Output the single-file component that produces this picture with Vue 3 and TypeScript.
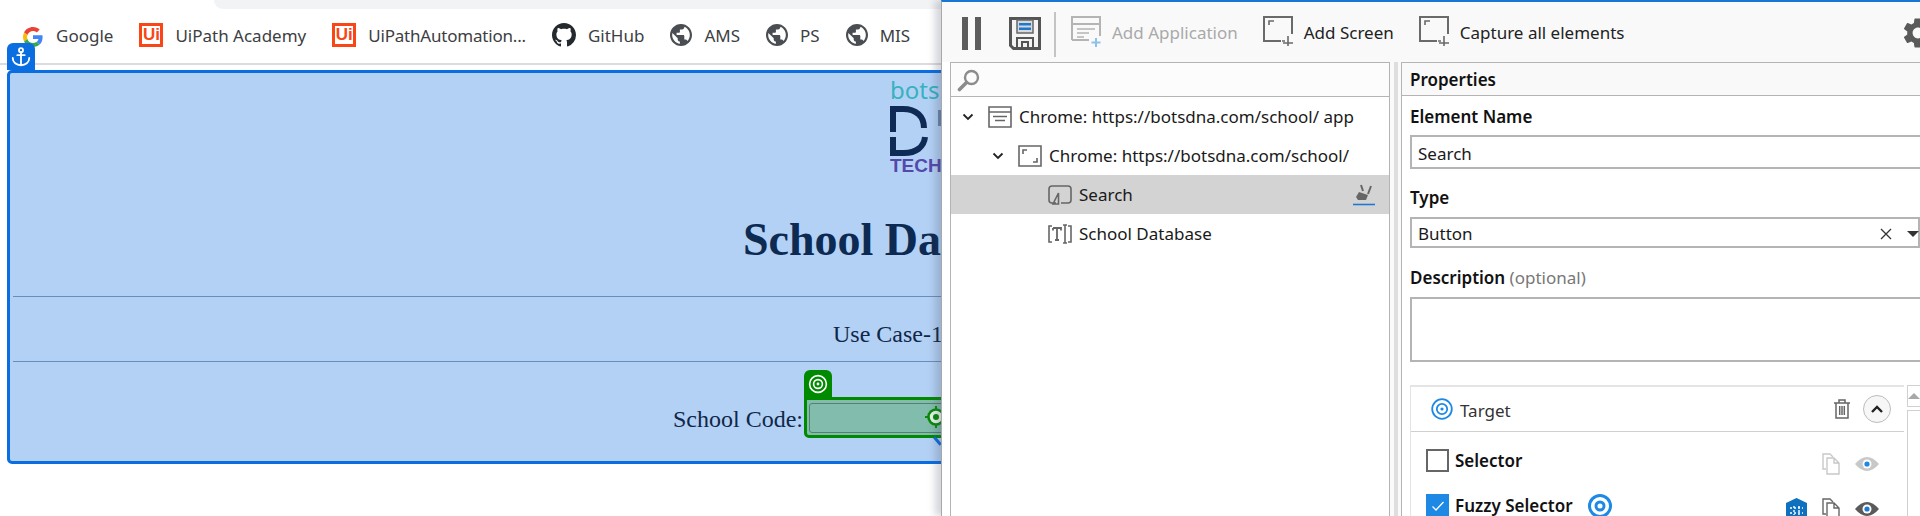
<template>
  <div class="desktop">
    <div class="browser">
      <div class="tabstrip"><div class="tabstrip-fill"></div></div>
      <div class="bookmarks">
        <div v-for="b in bookmarks" :key="b.label" class="bookmark">
          <svg v-if="b.kind === 'google'" class="bm-google" viewBox="0 0 48 48">
            <path fill="#EA4335" d="M24 9.5c3.54 0 6.71 1.22 9.21 3.6l6.85-6.85C35.9 2.38 30.47 0 24 0 14.62 0 6.51 5.38 2.56 13.22l7.98 6.19C12.43 13.72 17.74 9.5 24 9.5z" />
            <path fill="#4285F4" d="M46.98 24.55c0-1.57-.15-3.09-.38-4.55H24v9.02h12.94c-.58 2.96-2.26 5.48-4.78 7.18l7.73 6c4.51-4.18 7.09-10.36 7.09-17.65z" />
            <path fill="#FBBC05" d="M10.53 28.59c-.48-1.45-.76-2.99-.76-4.59s.27-3.14.76-4.59l-7.98-6.19C.92 16.46 0 20.12 0 24c0 3.88.92 7.54 2.56 10.78l7.97-6.19z" />
            <path fill="#34A853" d="M24 48c6.48 0 11.93-2.13 15.89-5.81l-7.73-6c-2.15 1.45-4.92 2.3-8.16 2.3-6.26 0-11.57-4.22-13.47-9.91l-7.98 6.19C6.51 42.62 14.62 48 24 48z" />
          </svg>
          <span v-else-if="b.kind === 'uipath'" class="bm-uipath">Ui</span>
          <svg v-else-if="b.kind === 'github'" class="bm-github" viewBox="0 0 16 16">
            <path fill="#24292e" d="M8 0C3.58 0 0 3.58 0 8c0 3.54 2.29 6.53 5.47 7.59.4.07.55-.17.55-.38 0-.19-.01-.82-.01-1.49-2.01.37-2.53-.49-2.69-.94-.09-.23-.48-.94-.82-1.13-.28-.15-.68-.52-.01-.53.63-.01 1.08.58 1.23.82.72 1.21 1.87.87 2.33.66.07-.52.28-.87.51-1.07-1.78-.2-3.64-.89-3.64-3.95 0-.87.31-1.59.82-2.15-.08-.2-.36-1.02.08-2.12 0 0 .67-.21 2.2.82.64-.18 1.32-.27 2-.27.68 0 1.36.09 2 .27 1.53-1.04 2.2-.82 2.2-.82.44 1.1.16 1.92.08 2.12.51.56.82 1.27.82 2.15 0 3.07-1.87 3.75-3.65 3.95.29.25.54.73.54 1.48 0 1.07-.01 1.93-.01 2.2 0 .21.15.46.55.38A8.013 8.013 0 0016 8c0-4.42-3.58-8-8-8z" />
          </svg>
          <svg v-else class="bm-globe" viewBox="2 2 20 20">
            <path fill="#4a4d51" d="M12 2C6.48 2 2 6.48 2 12s4.48 10 10 10 10-4.48 10-10S17.52 2 12 2zm-1 17.93c-3.95-.49-7-3.85-7-7.93 0-.62.08-1.21.21-1.79L9 15v1c0 1.1.9 2 2 2v1.93zm6.9-2.54c-.26-.81-1-1.39-1.9-1.39h-1v-3c0-.55-.45-1-1-1H8v-2h2c.55 0 1-.45 1-1V7h2c1.1 0 2-.9 2-2v-.41c2.93 1.19 5 4.06 5 7.41 0 2.08-.8 3.97-2.1 5.39z" />
          </svg>
          <span class="bm-label" :class="{ tight: b.tight }">{{ b.label }}</span>
        </div>
      </div>
      <div class="page">
        <div class="anchor-tab">
          <svg viewBox="0 0 24 24" width="22" height="22" fill="none" stroke="#fff" stroke-width="2" stroke-linecap="round">
            <circle cx="12" cy="4.5" r="2.2" />
            <path d="M12 7v14M8 10h8M3 13c0 5 4 8 9 8s9-3 9-8" />
          </svg>
        </div>
        <div class="box">
          <div class="logo">
            <span class="logo-bots">bots</span>
            <svg class="logo-d" viewBox="0 0 54 50" fill="none" stroke="#0f2a55" stroke-width="6">
              <path d="M3 26V3h10c13 0 21 7 21 19" />
              <path d="M3 31v16h11c12 0 20-6 21-16" />
              <path d="M51 4v16" stroke-opacity="0.45" />
            </svg>
            <span class="logo-tech">TECH</span>
          </div>
          <h1 class="title">School Database</h1>
          <div class="rule"></div>
          <div class="usecase">Use Case-1</div>
          <div class="rule"></div>
          <div class="code-row">
            <span class="code-label">School Code:</span>
            <div class="field">
              <div class="field-tab">
                <svg viewBox="0 0 20 20" width="20" height="20" fill="none" stroke="#fff">
                  <circle cx="10" cy="10" r="8.4" stroke-width="1.6" />
                  <circle cx="10" cy="10" r="4.4" stroke-width="1.6" />
                  <circle cx="10" cy="10" r="1.4" fill="#fff" stroke="none" />
                </svg>
              </div>
              <div class="field-box">
                <div class="field-inner">
                  <svg class="crosshair" viewBox="0 0 24 24" width="24" height="24">
                    <circle cx="12" cy="12" r="7.5" fill="#e8f4e8" stroke="#0a8a0a" stroke-width="2.6" />
                    <circle cx="12" cy="12" r="3" fill="#0a8a0a" />
                    <path d="M12 1v4M12 19v4M1 12h4M19 12h4" stroke="#0a8a0a" stroke-width="2" />
                  </svg>
                </div>
                <span class="field-tail"></span>
              </div>
            </div>
          </div>
        </div>
      </div>
    </div>

    <div class="window">
      <div class="toolbar">
        <div class="pause"><i></i><i></i></div>
        <svg class="save" viewBox="0 0 32 33">
          <path d="M1.5 1.5h29v30h-26l-3-3z" fill="#f4f4f4" stroke="#555" stroke-width="3" />
          <path d="M8 3h16v13H8z" fill="#d8d8d8" stroke="#666" stroke-width="1.5" />
          <path d="M10 6h12v2.4H10zM10 10.5h12v2.4H10z" fill="#1e78d2" />
          <path d="M8 31V21h16v10M13 31v-6h6v6" fill="none" stroke="#555" stroke-width="2" />
        </svg>
        <div class="tb-sep"></div>
        <div class="tb-item disabled">
          <svg class="tb-icon" viewBox="0 0 32 32" fill="none" stroke="#b4b4b4" stroke-width="2">
            <path d="M1 24V1h28v19M1 24h17M1 8h28" />
            <path d="M6 13h18M6 17h12M6 21h7" stroke-width="1.6" />
            <path d="M25 22v9M20.500 26.500h9" stroke="#8ec1ea" />
          </svg>
          <span>Add Application</span>
        </div>
        <div class="tb-item">
          <svg class="tb-icon" viewBox="0 0 32 32" fill="none" stroke="#6a6a6a" stroke-width="2">
            <path d="M18 25H1V1h28v17" />
            <path d="M6 9V5h5" stroke-width="1.6" />
            <path d="M19 25h3M25 20v10M20 27h10" stroke-width="1.6" />
          </svg>
          <span>Add Screen</span>
        </div>
        <div class="tb-item">
          <svg class="tb-icon" viewBox="0 0 32 32" fill="none" stroke="#6a6a6a" stroke-width="2">
            <path d="M18 25H1V1h28v17" />
            <path d="M6 9V5h5" stroke-width="1.6" />
            <path d="M19 25h3M25 20v10M20 27h10" stroke-width="1.6" />
          </svg>
          <span>Capture all elements</span>
        </div>
        <svg class="gear" viewBox="0 0 24 24">
          <path fill="#5a5a5a" d="M19.14 12.94c.04-.3.06-.61.06-.94 0-.32-.02-.64-.07-.94l2.03-1.58a.49.49 0 0 0 .12-.61l-1.92-3.32a.49.49 0 0 0-.59-.22l-2.39.96c-.5-.38-1.03-.7-1.62-.94l-.36-2.54a.48.48 0 0 0-.48-.41h-3.84c-.24 0-.43.17-.47.41l-.36 2.54c-.59.24-1.13.57-1.62.94l-2.39-.96a.49.49 0 0 0-.59.22L2.74 8.87c-.12.21-.08.47.12.61l2.03 1.58c-.05.3-.09.63-.09.94s.02.64.07.94l-2.03 1.58a.49.49 0 0 0-.12.61l1.92 3.32c.12.22.37.29.59.22l2.39-.96c.5.38 1.03.7 1.62.94l.36 2.54c.05.24.24.41.48.41h3.84c.24 0 .44-.17.47-.41l.36-2.54c.59-.24 1.13-.56 1.62-.94l2.39.96c.22.08.47 0 .59-.22l1.92-3.32c.12-.22.07-.47-.12-.61l-2.01-1.58zM12 15.600c-1.980 0-3.600-1.620-3.600-3.600s1.620-3.600 3.600-3.600 3.600 1.620 3.600 3.600-1.620 3.600-3.600 3.600z" />
        </svg>
      </div>

      <div class="panes">
        <div class="tree-pane">
          <div class="tree-search">
            <svg viewBox="0 0 24 24" width="24" height="24" fill="none">
              <circle cx="14.500" cy="9.500" r="6.500" stroke="#8c8c8c" stroke-width="2.400" />
              <path d="M9.500 14.500L2.500 21.500" stroke="#8c8c8c" stroke-width="3.600" stroke-linecap="round" />
            </svg>
          </div>
          <div
            v-for="row in rows"
            :key="row.label"
            class="tree-row"
            :class="{ selected: row.selected }"
            :style="{ paddingLeft: 8 + row.level * 30 + 'px' }"
          >
            <span class="chevron">
              <svg v-if="row.open" viewBox="0 0 12 8" width="12" height="8" fill="none" stroke="#222" stroke-width="1.800">
                <path d="M1.500 1.500L6 6l4.500-4.500" />
              </svg>
            </span>
            <svg class="tree-icon" viewBox="0 0 24 22" fill="none" stroke="#666" stroke-width="1.600">
              <template v-if="row.kind === 'app'">
                <path d="M1 1h22v20H1zM1 6h22M5 10.500h14M7 14.500h10" />
              </template>
              <template v-else-if="row.kind === 'screen'">
                <path d="M1 1h22v20H1zM5 9V5h4M19 13v4h-4" />
              </template>
              <template v-else-if="row.kind === 'button'">
                <path d="M8 19H4q-3 0-3-3V5q0-3 3-3h16q3 0 3 3v11q0 3-3 3h-7M10.500 9v11H5z" />
              </template>
              <template v-else>
                <path d="M4 3H1v16h3M20 3h3v16h-3M17 2v18M15 2h4M15 20h4" />
                <path d="M5 5h8v2.500M5 7.500V5M9 5v12M7 17h4" stroke-width="1.800" />
              </template>
            </svg>
            <span class="tree-label">{{ row.label }}</span>
            <svg v-if="row.selected" class="tree-pin" viewBox="0 0 22 22" fill="none">
              <path d="M8 1l2 6M18 2l-3 8" stroke="#666" stroke-width="2" />
              <path d="M6 8l9 3-2 5H5l-2-3z" fill="#666" />
              <path d="M0 20.500h22" stroke="#1e78d2" stroke-width="1.600" />
            </svg>
          </div>
        </div>

        <div class="splitter"><i></i></div>

        <div class="props">
          <div class="props-head">Properties</div>
          <div class="form">
            <label class="lbl first">Element Name</label>
            <div class="inp name">Search</div>
            <label class="lbl type">Type</label>
            <div class="inp select">
              <span>Button</span>
              <svg class="sel-x" viewBox="0 0 12 12" width="12" height="12" stroke="#333" stroke-width="1.300">
                <path d="M1 1l10 10M11 1L1 11" />
              </svg>
              <span class="sel-caret"></span>
            </div>
            <label class="lbl desc">Description <em>(optional)</em></label>
            <div class="inp area"></div>

            <div class="target-wrap">
              <div class="target">
                <div class="target-head">
                  <svg viewBox="0 0 22 22" width="22" height="22" fill="none" stroke="#1e88e5" stroke-width="1.800">
                    <circle cx="11" cy="11" r="9.800" />
                    <circle cx="11" cy="11" r="5.200" />
                    <circle cx="11" cy="11" r="1.600" fill="#1e88e5" stroke="none" />
                  </svg>
                  <span class="target-title">Target</span>
                  <svg class="trash" viewBox="0 0 16 20" width="16" height="20" fill="none" stroke="#666" stroke-width="1.500">
                    <path d="M0 4h16M2 4v15h12V4M5 4V1h6v3M5.700 7v9M8 7v9M10.300 7v9" />
                  </svg>
                  <span class="collapse">
                    <svg viewBox="0 0 14 10" width="14" height="10" fill="none" stroke="#222" stroke-width="2.400">
                      <path d="M2 8l5-5 5 5" />
                    </svg>
                  </span>
                </div>
                <div class="sel-row">
                  <span class="check"></span>
                  <span class="sel-name">Selector</span>
                  <div class="sel-actions off">
                    <svg class="copy" viewBox="0 0 18 22" fill="none" stroke-width="1.400">
                      <path d="M4 16H1V1h7l3 3" />
                      <path d="M5 5h7l5 5v11H5zM12 5v5h5" />
                    </svg>
                    <svg class="eye" viewBox="0 0 24 14">
                      <path d="M0 7q12-14 24 0-12 14-24 0z" />
                      <circle cx="12" cy="7" r="4.500" fill="#fff" />
                      <circle cx="12" cy="7" r="2.600" fill="#1e88e5" />
                    </svg>
                  </div>
                </div>
                <div class="sel-row">
                  <span class="check on">
                    <svg viewBox="0 0 14 12" width="14" height="12" fill="none" stroke="#fff" stroke-width="1.300"><path d="M1.500 6.500l3.500 3.500 7.500-8" /></svg>
                  </span>
                  <span class="sel-name">Fuzzy Selector</span>
                  <svg class="fuzzy-target" viewBox="0 0 24 24" fill="none" stroke="#1e88e5" stroke-width="3">
                    <circle cx="12" cy="12" r="10.500" />
                    <circle cx="12" cy="12" r="4" />
                  </svg>
                  <div class="sel-actions">
                    <svg class="hex" viewBox="0 0 21 22">
                      <path d="M10.500 0L21 5v17H0V5z" fill="#0f70bf" />
                      <path d="M4 10h13M4 15h13M8 8v9M13 8v9" stroke="#fff" stroke-width="1.400" stroke-dasharray="2 2" />
                    </svg>
                    <svg class="copy" viewBox="0 0 18 22" fill="none" stroke-width="1.400">
                      <path d="M4 16H1V1h7l3 3" />
                      <path d="M5 5h7l5 5v11H5zM12 5v5h5" />
                    </svg>
                    <svg class="eye" viewBox="0 0 24 14">
                      <path d="M0 7q12-14 24 0-12 14-24 0z" />
                      <circle cx="12" cy="7" r="4.500" fill="#fff" />
                      <circle cx="12" cy="7" r="2.600" fill="#1e78d2" />
                    </svg>
                  </div>
                </div>
              </div>
              <div class="scrollbar">
                <div class="scroll-up"><span></span></div>
                <div class="scroll-track"></div>
              </div>
            </div>
          </div>
        </div>
      </div>
    </div>
  </div>
</template>

<script setup lang="ts">
interface Bookmark {
  label: string
  kind: 'google' | 'uipath' | 'github' | 'globe'
  tight?: boolean
}

interface TreeRow {
  label: string
  kind: 'app' | 'screen' | 'button' | 'text'
  level: number
  open?: boolean
  selected?: boolean
}

const bookmarks: Bookmark[] = [
  { label: 'Google', kind: 'google' },
  { label: 'UiPath Academy', kind: 'uipath' },
  { label: 'UiPathAutomation...', kind: 'uipath', tight: true },
  { label: 'GitHub', kind: 'github' },
  { label: 'AMS', kind: 'globe' },
  { label: 'PS', kind: 'globe' },
  { label: 'MIS', kind: 'globe' },
]

const rows: TreeRow[] = [
  { label: 'Chrome: https://botsdna.com/school/ app', kind: 'app', level: 0, open: true },
  { label: 'Chrome: https://botsdna.com/school/', kind: 'screen', level: 1, open: true },
  { label: 'Search', kind: 'button', level: 2, selected: true },
  { label: 'School Database', kind: 'text', level: 2 },
]
</script>

<style>
html,
body {
  margin: 0;
  background: #fff;
  overflow: hidden;
}
</style>

<style scoped>
.desktop {
  position: relative;
  width: 1920px;
  height: 516px;
  overflow: hidden;
  background: #fff;
  font-family: "Noto Sans", "Open Sans", sans-serif;
}

.tabstrip {
  height: 9px;
  padding-left: 214px;
  background: #fff;
}
.tabstrip-fill {
  height: 9px;
  background: #f1f3f4;
  border-bottom-left-radius: 9px;
}

.bookmarks {
  display: flex;
  align-items: center;
  gap: 26px;
  padding-left: 23px;
  box-sizing: border-box;
  border-bottom: 2px solid #dadce0;
  height: 56px;
  white-space: nowrap;
}
.bookmark {
  display: flex;
  align-items: center;
  gap: 12px;
  margin-top: -2px;
  font-size: 17px;
  color: #3c4043;
}
.bm-label.tight {
  letter-spacing: -0.2px;
}
.bm-google {
  width: 20px;
  height: 20px;
  margin-top: 3px;
  margin-right: 1px;
}
.bm-uipath {
  width: 24px;
  height: 24px;
  box-sizing: border-box;
  border: 3px solid #fa4616;
  background: #fff;
  color: #fa4616;
  font: 700 17px/18px "Liberation Sans", sans-serif;
  text-align: center;
}
.bm-github {
  width: 24px;
  height: 24px;
}
.bm-globe {
  width: 22px;
  height: 22px;
}

.page {
  position: relative;
  padding: 5px 7px 0;
}
.anchor-tab {
  position: absolute;
  left: 7px;
  top: -22px;
  z-index: 1;
  width: 28px;
  height: 27px;
  display: flex;
  align-items: center;
  justify-content: center;
  background: #0a6de0;
  border-radius: 6px 6px 0 0;
}
.box {
  height: 394px;
  box-sizing: border-box;
  border: 3px solid #0a6de0;
  border-radius: 5px;
  background: #b3d1f5;
  color: #0f2748;
  font-family: "Liberation Serif", serif;
  font-size: 24px;
}
.logo {
  display: flex;
  flex-direction: column;
  align-items: flex-start;
  height: 115px;
  padding: 7px 0 0 880px;
  box-sizing: border-box;
}
.logo-bots {
  font: 24px/20px "Noto Sans", sans-serif;
  color: #37b1bf;
}
.logo-d {
  width: 54px;
  height: 50px;
  margin-top: 6px;
}
.logo-tech {
  margin-top: 3px;
  font: 700 19px/14px "Liberation Sans", sans-serif;
  color: #5548ac;
}
.title {
  margin: 0;
  height: 108px;
  padding: 0 0 6px 733px;
  box-sizing: border-box;
  display: flex;
  align-items: center;
  font-size: 46px;
  font-weight: 700;
  color: #0d2a52;
  white-space: nowrap;
}
.rule {
  height: 1px;
  margin: 0 0 0 3px;
  background: #6b8dbb;
}
.usecase {
  height: 64px;
  padding: 10px 0 0 823px;
  box-sizing: border-box;
  display: flex;
  align-items: center;
}
.code-row {
  display: flex;
  align-items: flex-end;
  gap: 1px;
  padding: 8px 0 0 663px;
}
.code-label {
  line-height: 27px;
  margin-bottom: 5px;
  white-space: nowrap;
}
.field-tab {
  width: 28px;
  height: 27px;
  display: flex;
  align-items: center;
  justify-content: center;
  background: #008a00;
  border-radius: 6px 6px 0 0;
}
.field-box {
  position: relative;
  width: 300px;
  height: 41px;
  box-sizing: border-box;
  border: 3px solid #008a00;
  border-radius: 0 5px 5px 5px;
  background: #82bcac;
  padding: 3px 2px 2px;
}
.field-inner {
  position: relative;
  height: 100%;
  box-sizing: border-box;
  border: 1px solid #55806f;
  border-radius: 3px;
}
.crosshair {
  position: absolute;
  left: 114px;
  top: 1px;
}
.field-tail {
  position: absolute;
  left: 129px;
  top: 36px;
  width: 3px;
  height: 10px;
  background: #0a6de0;
  transform: rotate(-40deg);
}

.window {
  position: absolute;
  left: 941px;
  top: 0;
  width: 979px;
  height: 516px;
  box-sizing: border-box;
  border-top: 2px solid #1976d2;
  border-left: 1px solid #a8a8a8;
  background: #f9f9f9;
  box-shadow: -6px 0 7px rgba(60, 70, 90, 0.22);
  display: flex;
  flex-direction: column;
}
.toolbar {
  display: flex;
  align-items: center;
  height: 60px;
  flex: none;
  padding-left: 20px;
}
.pause {
  display: flex;
  gap: 7px;
  margin-top: 3px;
}
.pause i {
  display: block;
  width: 6px;
  height: 33px;
  background: #5c5c5c;
}
.save {
  width: 32px;
  height: 33px;
  margin: 3px 0 0 28px;
}
.tb-sep {
  width: 2px;
  height: 45px;
  margin: 5px 15px 0 13px;
  background: #c4c4c4;
}
.tb-item {
  display: flex;
  align-items: center;
  gap: 9px;
  margin-right: 25px;
  font-size: 17px;
  color: #222;
  white-space: nowrap;
}
.tb-item.disabled {
  color: #a9a9a9;
}
.tb-icon {
  width: 32px;
  height: 32px;
}
.gear {
  position: absolute;
  left: 958px;
  top: 13px;
  width: 36px;
  height: 36px;
}

.panes {
  display: flex;
  flex: 1;
  min-height: 0;
  padding-left: 8px;
  background: #fff;
}
.tree-pane {
  width: 440px;
  flex: none;
  box-sizing: border-box;
  border: solid #b4b4b4;
  border-width: 1px 1px 0;
  background: #fff;
}
.tree-search {
  display: flex;
  align-items: center;
  height: 33px;
  padding-left: 6px;
  background: #fcfcfc;
  border-bottom: 1px solid #b4b4b4;
}
.tree-row {
  display: flex;
  align-items: center;
  height: 39px;
  font-size: 17px;
  color: #1a1a1a;
  white-space: nowrap;
}
.tree-row.selected {
  background: #d3d3d3;
}
.chevron {
  display: flex;
  justify-content: center;
  width: 18px;
  margin-right: 11px;
  flex: none;
}
.tree-icon {
  width: 24px;
  height: 22px;
  margin-right: 7px;
  flex: none;
}
.tree-pin {
  width: 22px;
  height: 22px;
  margin-left: auto;
  margin-right: 14px;
}
.splitter {
  width: 11px;
  flex: none;
  display: flex;
  justify-content: center;
  background: #fafafa;
}
.splitter i {
  display: block;
  width: 4px;
  background: #dedede;
}
.props {
  flex: 1;
  min-width: 0;
  border-left: 1px solid #b4b4b4;
  border-top: 1px solid #b4b4b4;
}
.props-head {
  height: 31px;
  padding: 1px 0 0 8px;
  display: flex;
  align-items: center;
  background: #f9f9f9;
  border-bottom: 1px solid #b4b4b4;
  font-size: 17px;
  font-weight: 600;
  color: #111;
}
.form {
  padding-left: 8px;
}
.lbl {
  display: block;
  line-height: 22px;
  font-size: 17px;
  font-weight: 600;
  color: #111;
}
.lbl em {
  font-style: normal;
  font-weight: 400;
  color: #777;
}
.lbl.first {
  margin: 10px 0 7px;
}
.lbl.type {
  margin: 18px 0 8px;
}
.lbl.desc {
  margin: 19px 0 8px;
}
.inp {
  display: flex;
  align-items: center;
  width: 560px;
  box-sizing: border-box;
  padding-left: 6px;
  border: 2px solid #b4b4b4;
  font-size: 17px;
  color: #1a1a1a;
}
.inp.name {
  height: 34px;
  padding-top: 2px;
}
.inp.select {
  width: 510px;
  height: 31px;
  padding-top: 2px;
}
.inp.area {
  height: 65px;
}
.sel-x {
  margin-left: auto;
  margin-right: 15px;
}
.sel-caret {
  width: 0;
  height: 0;
  border-left: 6px solid transparent;
  border-right: 6px solid transparent;
  border-top: 6px solid #333;
  margin-right: -1px;
}
.target-wrap {
  display: flex;
  gap: 3px;
  margin-top: 23px;
}
.target {
  width: 494px;
  flex: none;
  box-sizing: border-box;
  border: solid #e4e4e4;
  border-width: 2px 0 0 1px;
}
.target-head {
  display: flex;
  align-items: center;
  height: 44px;
  margin-bottom: 6px;
  padding-left: 20px;
  border-bottom: 1px solid #d0d0d0;
}
.target-title {
  margin-left: 7px;
  padding-top: 2px;
  font-size: 17px;
  color: #333;
}
.trash {
  margin-left: auto;
}
.collapse {
  display: flex;
  align-items: center;
  justify-content: center;
  width: 28px;
  height: 28px;
  margin: 0 13px;
  box-sizing: border-box;
  border: 1px solid #bcbcbc;
  border-radius: 50%;
  background: #f7f7f7;
}
.sel-row {
  display: flex;
  align-items: center;
  height: 45px;
  padding-left: 15px;
  font-size: 17px;
}
.check {
  display: flex;
  align-items: center;
  justify-content: center;
  width: 23px;
  height: 23px;
  box-sizing: border-box;
  border: 2px solid #666;
  background: #fff;
}
.check.on {
  background: #1e88e5;
  border-color: #1e88e5;
}
.sel-name {
  margin-left: 6px;
  font-weight: 600;
  color: #111;
}
.fuzzy-target {
  width: 24px;
  height: 24px;
  margin-left: 15px;
}
.sel-actions {
  display: flex;
  align-items: center;
  gap: 15px;
  margin-left: auto;
  padding: 6px 25px 0 0;
}
.copy {
  width: 18px;
  height: 22px;
  stroke: #666;
}
.eye {
  width: 24px;
  height: 14px;
  fill: #5a5a5a;
}
.hex {
  width: 21px;
  height: 22px;
}
.sel-actions.off .copy {
  stroke: #c8c8c8;
}
.sel-actions.off .eye {
  fill: #c8c8c8;
}
.scrollbar {
  flex: 1;
  display: flex;
  flex-direction: column;
  gap: 3px;
}
.scroll-up {
  display: flex;
  align-items: center;
  justify-content: center;
  height: 22px;
  box-sizing: border-box;
  border: 1px solid #d0d0d0;
}
.scroll-up span {
  width: 0;
  height: 0;
  border-left: 6px solid transparent;
  border-right: 6px solid transparent;
  border-bottom: 6px solid #a8a8a8;
}
.scroll-track {
  flex: 1;
  border: 1px solid #d0d0d0;
}
</style>
